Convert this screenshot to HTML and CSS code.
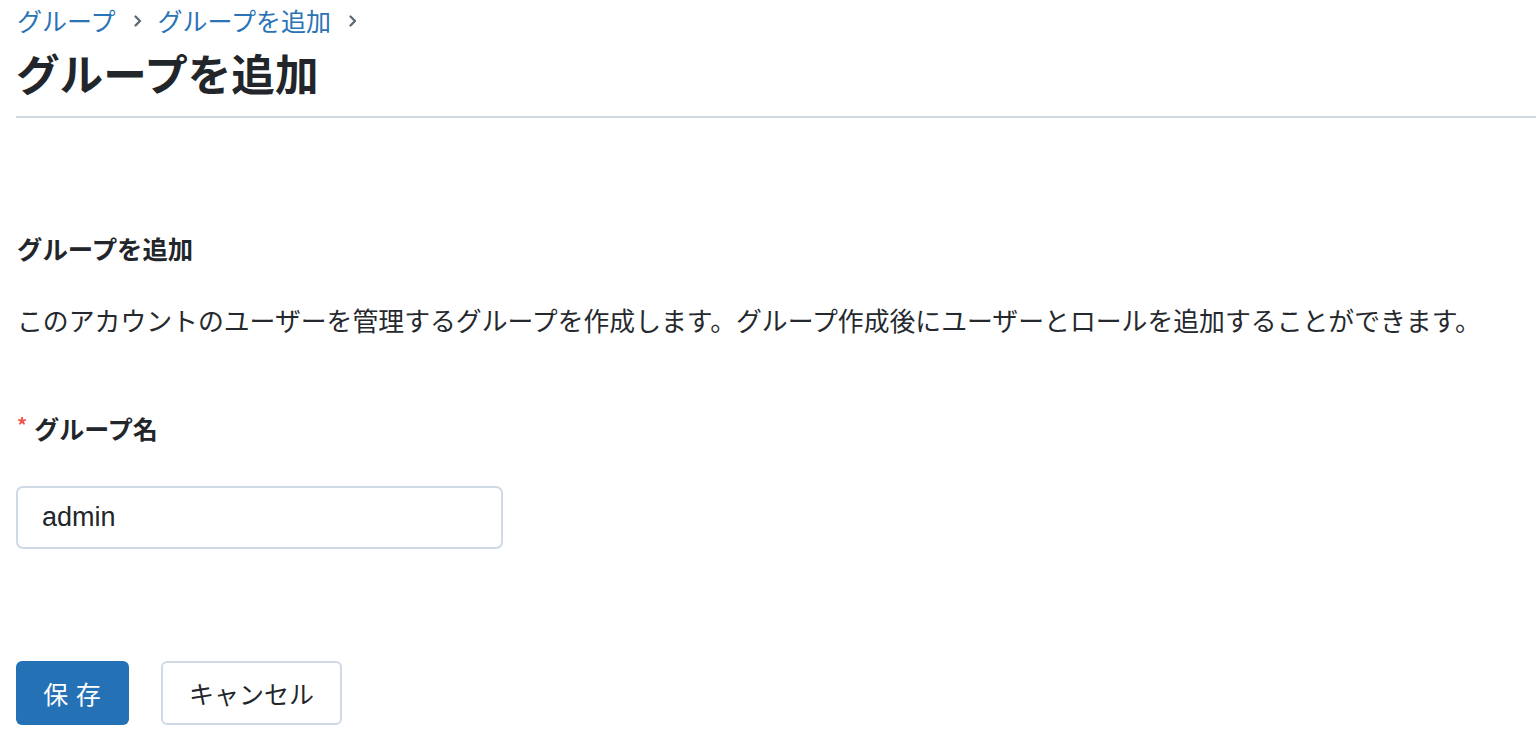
FILE: index.html
```html
<!DOCTYPE html>
<html lang="ja">
<head>
<meta charset="utf-8">
<title>グループを追加</title>
<link rel="stylesheet" href="styles.css">
</head>
<body>
<div class="page">
  <nav class="breadcrumb">
    <a class="crumb" href="#">グループ</a>
    <svg class="chev" width="10" height="14" viewBox="0 0 10 14"><path d="M2.5 2.5 L7 7 L2.5 11.5" fill="none" stroke="#5f6b78" stroke-width="2.4" stroke-linecap="round" stroke-linejoin="round"/></svg>
    <a class="crumb" href="#">グループを追加</a>
    <svg class="chev" width="10" height="14" viewBox="0 0 10 14"><path d="M2.5 2.5 L7 7 L2.5 11.5" fill="none" stroke="#5f6b78" stroke-width="2.4" stroke-linecap="round" stroke-linejoin="round"/></svg>
  </nav>
  <h1 class="title">グループを追加</h1>
  <div class="rule"></div>
  <section class="form">
    <h2 class="section-title">グループを追加</h2>
    <p class="desc">このアカウントのユーザーを管理するグループを作成します。グループ作成後にユーザーとロールを追加することができます。</p>
    <label class="label"><span class="req">*</span>グループ名</label>
    <input class="input" type="text" value="admin">
    <div class="actions">
      <button class="btn btn-primary">保 存</button>
      <button class="btn btn-secondary">キャンセル</button>
    </div>
  </section>
</div>
</body>
</html>
```

FILE: styles.css
```css
* { box-sizing: border-box; }
html, body { margin: 0; padding: 0; background: #fff; }
body {
  font-family: "Noto Sans CJK JP", "Noto Sans", sans-serif;
  color: #22262b;
}
.page {
  padding-left: 16px;
}
.breadcrumb {
  display: flex;
  align-items: center;
  height: 40px;
  padding-left: 1px;
}
.crumb {
  color: #2a73b6;
  text-decoration: none;
  font-size: 25px;
  line-height: 40px;
}
.chev {
  margin: 0 15px 0 17px;
  position: relative;
  top: 1px;
}
.title {
  margin: 6px 0 0 0;
  font-size: 43.6px;
  line-height: 52px;
  font-weight: 700;
  color: #22262b;
}
.rule {
  margin-top: 18px;
  height: 2px;
  background: #d0dae3;
}
.form {
  padding-top: 112px;
  padding-left: 1px;
}
.section-title {
  margin: 0;
  font-size: 25.4px;
  line-height: 36px;
  font-weight: 700;
}
.desc {
  margin: 36px 0 0 0;
  font-size: 25.85px;
  line-height: 36px;
  white-space: nowrap;
  color: #25292e;
}
.label {
  display: flex;
  align-items: center;
  margin-top: 72px;
  font-size: 25px;
  line-height: 36px;
  font-weight: 700;
}
.req {
  color: #f0534d;
  font-size: 20px;
  margin-right: 7px;
  position: relative;
  top: -3px;
}
.input {
  display: block;
  margin-top: 40px;
  margin-left: -1px;
  width: 487px;
  height: 63px;
  border: 2px solid #d0dae6;
  border-radius: 7px;
  padding: 0 24px;
  font-family: "Liberation Sans", Arial, sans-serif;
  font-size: 27px;
  color: #22262b;
  outline: none;
}
.actions {
  display: flex;
  gap: 32px;
  margin-top: 112px;
  margin-left: -1px;
}
.btn {
  height: 64px;
  border-radius: 6px;
  font-family: "Noto Sans CJK JP", "Noto Sans", sans-serif;
  font-size: 25px;
  padding: 0;
  cursor: pointer;
}
.btn-primary {
  width: 113px;
  background: #2472b5;
  border: none;
  color: #fff;
  letter-spacing: 1px;
}
.btn-secondary {
  width: 181px;
  background: #fff;
  border: 2px solid #d0dae6;
  color: #22262b;
}
```
